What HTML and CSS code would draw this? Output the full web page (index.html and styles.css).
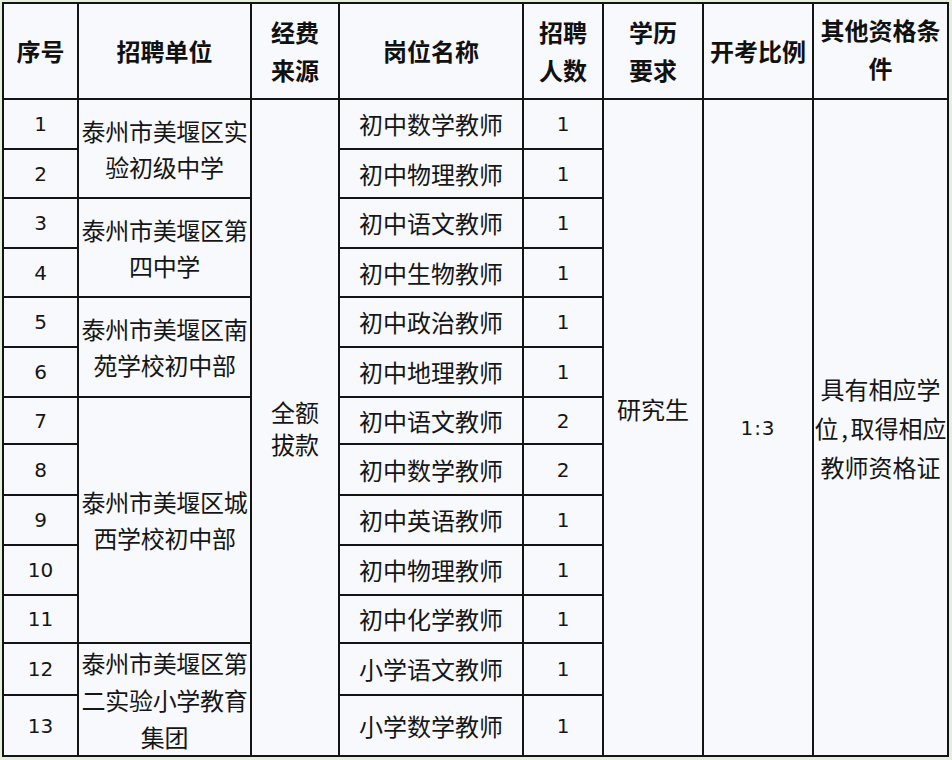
FILE: index.html
```html
<!DOCTYPE html>
<html lang="zh-CN">
<head>
<meta charset="utf-8">
<title>招聘岗位表</title>
<link rel="stylesheet" href="styles.css">
</head>
<body>
<table class="jobs">
  <colgroup>
    <col class="c-no"><col class="c-unit"><col class="c-fund"><col class="c-post">
    <col class="c-num"><col class="c-edu"><col class="c-ratio"><col class="c-other">
  </colgroup>
  <tr class="h-head">
    <th>序号</th>
    <th>招聘单位</th>
    <th>经费<br>来源</th>
    <th>岗位名称</th>
    <th>招聘<br>人数</th>
    <th>学历<br>要求</th>
    <th>开考比例</th>
    <th class="th-other">其他资格条件</th>
  </tr>
  <tr class="h1">
    <td class="num">1</td>
    <td class="unit" rowspan="2">泰州市美堰区实<br>验初级中学</td>
    <td class="fund" rowspan="13">全额<br>拔款</td>
    <td class="post">初中数学教师</td>
    <td class="num">1</td>
    <td class="edu" rowspan="13"><div class="edu-text">研究生</div></td>
    <td class="ratio" rowspan="13">1:3</td>
    <td class="other" rowspan="13">具有相应学<br>位<span class="comma">,</span>取得相应<br>教师资格证</td>
  </tr>
  <tr class="h2"><td class="num">2</td><td class="post">初中物理教师</td><td class="num">1</td></tr>
  <tr class="h3">
    <td class="num">3</td>
    <td class="unit" rowspan="2">泰州市美堰区第<br>四中学</td>
    <td class="post">初中语文教师</td><td class="num">1</td>
  </tr>
  <tr class="h4"><td class="num">4</td><td class="post">初中生物教师</td><td class="num">1</td></tr>
  <tr class="h5">
    <td class="num">5</td>
    <td class="unit" rowspan="2">泰州市美堰区南<br>苑学校初中部</td>
    <td class="post">初中政治教师</td><td class="num">1</td>
  </tr>
  <tr class="h6"><td class="num">6</td><td class="post">初中地理教师</td><td class="num">1</td></tr>
  <tr class="h7">
    <td class="num">7</td>
    <td class="unit" rowspan="5">泰州市美堰区城<br>西学校初中部</td>
    <td class="post">初中语文教师</td><td class="num">2</td>
  </tr>
  <tr class="h8"><td class="num">8</td><td class="post">初中数学教师</td><td class="num">2</td></tr>
  <tr class="h9"><td class="num">9</td><td class="post">初中英语教师</td><td class="num">1</td></tr>
  <tr class="h10"><td class="num">10</td><td class="post">初中物理教师</td><td class="num">1</td></tr>
  <tr class="h11"><td class="num">11</td><td class="post">初中化学教师</td><td class="num">1</td></tr>
  <tr class="h12">
    <td class="num">12</td>
    <td class="unit unit3" rowspan="2">泰州市美堰区第<br>二实验小学教育<br>集团</td>
    <td class="post">小学语文教师</td><td class="num">1</td>
  </tr>
  <tr class="h13"><td class="num">13</td><td class="post">小学数学教师</td><td class="num">1</td></tr>
</table>
</body>
</html>
```

FILE: styles.css
```css
html, body {
  margin: 0;
  padding: 0;
}
body {
  background: #e4efe0;
  width: 952px;
  height: 760px;
  overflow: hidden;
}
.jobs {
  margin: 2px 0 0 2px;
  border-collapse: collapse;
  table-layout: fixed;
  width: 947px;
  background: #f8f9fc;
  color: #161616;
  font-family: "Noto Sans CJK SC", "Noto Sans", sans-serif;
  font-size: 24px;
}
.jobs th, .jobs td {
  border: 2px solid #141414;
  padding: 0;
  text-align: center;
  vertical-align: middle;
  overflow: visible;
  white-space: nowrap;
}
.c-no { width: 75px; }
.c-unit { width: 173px; }
.c-fund { width: 88px; }
.c-post { width: 184px; }
.c-num { width: 80px; }
.c-edu { width: 100px; }
.c-ratio { width: 110px; }
.c-other { width: 135px; }

.jobs th {
  font-weight: 700;
  line-height: 38px;
  color: #111;
}
.jobs th.th-other {
  white-space: normal;
  line-height: 38px;
  padding-bottom: 4px;
}
.h-head { height: 96px; }
.h1 { height: 50px; }
.h2 { height: 49px; }
.h3 { height: 50px; }
.h4 { height: 49px; }
.h5 { height: 50px; }
.h6 { height: 50px; }
.h7 { height: 47px; }
.h8 { height: 51px; }
.h9 { height: 50px; }
.h10 { height: 50px; }
.h11 { height: 48px; }
.h12 { height: 52px; }
.h13 { height: 60px; }

.num {
  font-family: "DejaVu Sans", sans-serif;
  font-size: 20px;
  line-height: 24px;
}
.unit {
  line-height: 36px;
  letter-spacing: -0.3px;
}
.unit3 {
  line-height: 37px;
  padding-bottom: 2px;
}
.post {
  line-height: 30px;
  padding-top: 2px;
}
.fund {
  line-height: 32px;
  padding-top: 2px;
}
.edu {
  line-height: 30px;
}
.edu-text {
  margin-bottom: 38px;
}
.ratio {
  font-family: "DejaVu Sans", sans-serif;
  font-size: 20px;
  letter-spacing: 1px;
  padding-top: 6px;
}
.other {
  line-height: 39px;
  padding-top: 4px;
}
.comma {
  display: inline-block;
  width: 12px;
  text-align: center;
}
```
